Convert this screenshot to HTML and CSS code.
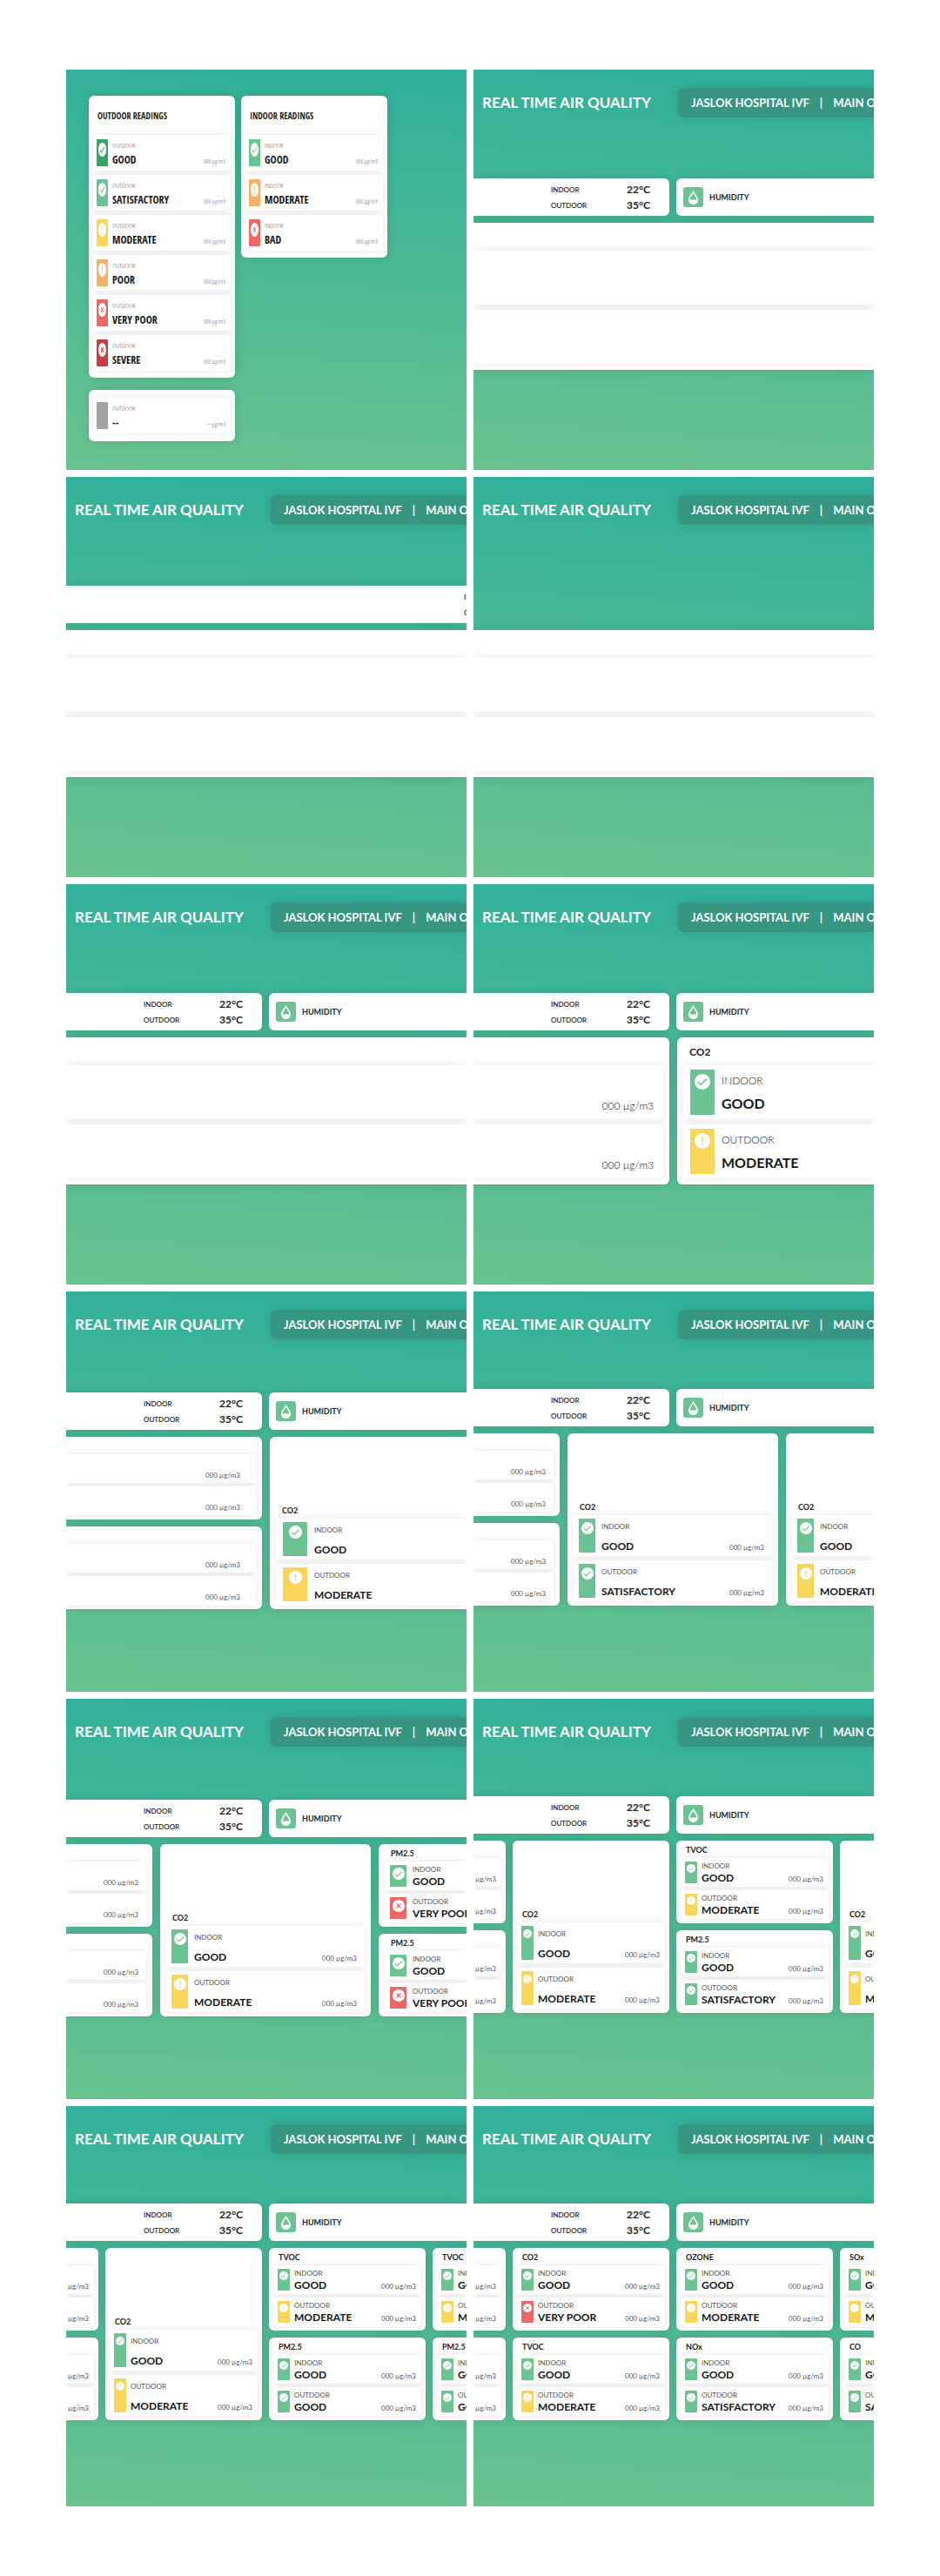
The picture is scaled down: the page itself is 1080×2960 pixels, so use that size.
FILE: index.html
```html
<!DOCTYPE html>
<html lang="en">
<head>
<meta charset="utf-8">
<meta name="viewport" content="width=device-width, initial-scale=1">
<title>Real Time Air Quality</title>
<link rel="stylesheet" href="styles.css">
</head>
<body>
<svg class="sprite" aria-hidden="true">
  <symbol id="ok" viewBox="0 0 24 24" preserveAspectRatio="none"><ellipse cx="12" cy="12" rx="12" ry="12" fill="#fff"/><path d="M5.5 12.5l4.2 4.2L18.6 7.8" fill="none" stroke="currentColor" stroke-width="2"/></symbol>
  <symbol id="warn" viewBox="0 0 24 24" preserveAspectRatio="none"><ellipse cx="12" cy="12" rx="12" ry="12" fill="#fff"/><path d="M12 6v7.4M12 15.6v2.4" fill="none" stroke="currentColor" stroke-width="2.4"/></symbol>
  <symbol id="bad" viewBox="0 0 24 24" preserveAspectRatio="none"><ellipse cx="12" cy="12" rx="12" ry="12" fill="#fff"/><path d="M7.8 7.8l8.4 8.4M16.2 7.8l-8.4 8.4" fill="none" stroke="currentColor" stroke-width="2.4"/></symbol>
  <symbol id="drop" viewBox="0 0 11 16"><path d="M5.5 0C4 2.8 0 7 0 10.6a5.5 5.4 0 0 0 11 0C11 7 7 2.8 5.5 0z" fill="#fff"/><path d="M5.5 2.8C4.4 5 1.8 7.8 1.6 10.4h7.8C9.2 7.8 6.6 5 5.5 2.8z" fill="currentColor"/></symbol>
</svg>

<main class="sheet">

  <!-- Legend of every reading state -->
  <section class="board legend">
    <div class="legend-column">
      <article class="card">
        <h2 class="card-title">OUTDOOR READINGS</h2>
        <div class="reading"><span class="bar excellent"><svg class="icon"><use href="#ok"/></svg></span><div class="state"><span class="place">OUTDOOR</span><strong class="status">GOOD</strong></div><span class="value">000 µg/m3</span></div>
        <div class="reading"><span class="bar good"><svg class="icon"><use href="#ok"/></svg></span><div class="state"><span class="place">OUTDOOR</span><strong class="status">SATISFACTORY</strong></div><span class="value">000 µg/m3</span></div>
        <div class="reading"><span class="bar moderate"><svg class="icon"><use href="#warn"/></svg></span><div class="state"><span class="place">OUTDOOR</span><strong class="status">MODERATE</strong></div><span class="value">000 µg/m3</span></div>
        <div class="reading"><span class="bar poor"><svg class="icon"><use href="#warn"/></svg></span><div class="state"><span class="place">OUTDOOR</span><strong class="status">POOR</strong></div><span class="value">000 µg/m3</span></div>
        <div class="reading"><span class="bar very-poor"><svg class="icon"><use href="#bad"/></svg></span><div class="state"><span class="place">OUTDOOR</span><strong class="status">VERY POOR</strong></div><span class="value">000 µg/m3</span></div>
        <div class="reading"><span class="bar severe"><svg class="icon"><use href="#bad"/></svg></span><div class="state"><span class="place">OUTDOOR</span><strong class="status">SEVERE</strong></div><span class="value">000 µg/m3</span></div>
      </article>
      <article class="card untitled">
        <div class="reading"><span class="bar offline"></span><div class="state"><span class="place">OUTDOOR</span><strong class="status">--</strong></div><span class="value">--- µg/m3</span></div>
      </article>
    </div>
    <div class="legend-column">
      <article class="card">
        <h2 class="card-title">INDOOR READINGS</h2>
        <div class="reading"><span class="bar good"><svg class="icon"><use href="#ok"/></svg></span><div class="state"><span class="place">INDOOR</span><strong class="status">GOOD</strong></div><span class="value">000 µg/m3</span></div>
        <div class="reading"><span class="bar poor"><svg class="icon"><use href="#warn"/></svg></span><div class="state"><span class="place">INDOOR</span><strong class="status">MODERATE</strong></div><span class="value">000 µg/m3</span></div>
        <div class="reading"><span class="bar very-poor"><svg class="icon"><use href="#bad"/></svg></span><div class="state"><span class="place">INDOOR</span><strong class="status">BAD</strong></div><span class="value">000 µg/m3</span></div>
      </article>
    </div>
  </section>

  <section class="board large">
    <header class="top"><h1 class="title">REAL TIME AIR QUALITY</h1><p class="site"><span>JASLOK HOSPITAL IVF</span><span>|</span><span>MAIN O</span></p></header>
    <div class="climate">
      <dl class="panel temps"><dt>INDOOR</dt><dd>22°C</dd><dt>OUTDOOR</dt><dd>35°C</dd></dl>
      <div class="panel humidity"><span class="chip"><svg class="drop"><use href="#drop"/></svg></span><span>HUMIDITY</span></div>
    </div>
    <div class="cards one">
      <article class="card from-left to-right"><div class="card-title"></div><div class="reading"></div><div class="reading"></div></article>
    </div>
  </section>

  <section class="board large">
    <header class="top"><h1 class="title">REAL TIME AIR QUALITY</h1><p class="site"><span>JASLOK HOSPITAL IVF</span><span>|</span><span>MAIN O</span></p></header>
    <div class="climate wide">
      <dl class="panel temps"><dt>INDOOR</dt><dt>OUTDOOR</dt></dl>
    </div>
    <div class="cards one">
      <article class="card from-left to-right"><div class="card-title"></div><div class="reading"></div><div class="reading"></div></article>
    </div>
  </section>

  <section class="board large no-climate">
    <header class="top"><h1 class="title">REAL TIME AIR QUALITY</h1><p class="site"><span>JASLOK HOSPITAL IVF</span><span>|</span><span>MAIN O</span></p></header>
    <div class="cards one">
      <article class="card from-left to-right"><div class="card-title"></div><div class="reading"></div><div class="reading"></div></article>
    </div>
  </section>

  <section class="board large">
    <header class="top"><h1 class="title">REAL TIME AIR QUALITY</h1><p class="site"><span>JASLOK HOSPITAL IVF</span><span>|</span><span>MAIN O</span></p></header>
    <div class="climate">
      <dl class="panel temps"><dt>INDOOR</dt><dd>22°C</dd><dt>OUTDOOR</dt><dd>35°C</dd></dl>
      <div class="panel humidity"><span class="chip"><svg class="drop"><use href="#drop"/></svg></span><span>HUMIDITY</span></div>
    </div>
    <div class="cards one">
      <article class="card from-left to-right"><div class="card-title"></div><div class="reading"></div><div class="reading"></div></article>
    </div>
  </section>

  <section class="board large">
    <header class="top"><h1 class="title">REAL TIME AIR QUALITY</h1><p class="site"><span>JASLOK HOSPITAL IVF</span><span>|</span><span>MAIN O</span></p></header>
    <div class="climate">
      <dl class="panel temps"><dt>INDOOR</dt><dd>22°C</dd><dt>OUTDOOR</dt><dd>35°C</dd></dl>
      <div class="panel humidity"><span class="chip"><svg class="drop"><use href="#drop"/></svg></span><span>HUMIDITY</span></div>
    </div>
    <div class="cards two">
      <article class="card from-left"><div class="card-title"></div>
        <div class="reading"><span class="value">000 µg/m3</span></div>
        <div class="reading"><span class="value">000 µg/m3</span></div>
      </article>
      <article class="card to-right"><h2 class="card-title">CO2</h2>
        <div class="reading"><span class="bar good"><svg class="icon"><use href="#ok"/></svg></span><div class="state"><span class="place">INDOOR</span><strong class="status">GOOD</strong></div></div>
        <div class="reading"><span class="bar moderate"><svg class="icon"><use href="#warn"/></svg></span><div class="state"><span class="place">OUTDOOR</span><strong class="status">MODERATE</strong></div></div>
      </article>
    </div>
  </section>

  <section class="board medium tall-top">
    <header class="top"><h1 class="title">REAL TIME AIR QUALITY</h1><p class="site"><span>JASLOK HOSPITAL IVF</span><span>|</span><span>MAIN O</span></p></header>
    <div class="climate">
      <dl class="panel temps"><dt>INDOOR</dt><dd>22°C</dd><dt>OUTDOOR</dt><dd>35°C</dd></dl>
      <div class="panel humidity"><span class="chip"><svg class="drop"><use href="#drop"/></svg></span><span>HUMIDITY</span></div>
    </div>
    <div class="cards two">
      <article class="card from-left"><div class="card-title"></div>
        <div class="reading"><span class="value">000 µg/m3</span></div>
        <div class="reading"><span class="value">000 µg/m3</span></div>
      </article>
      <article class="card hero to-right"><h2 class="card-title">CO2</h2>
        <div class="reading"><span class="bar good"><svg class="icon"><use href="#ok"/></svg></span><div class="state"><span class="place">INDOOR</span><strong class="status">GOOD</strong></div></div>
        <div class="reading"><span class="bar moderate"><svg class="icon"><use href="#warn"/></svg></span><div class="state"><span class="place">OUTDOOR</span><strong class="status">MODERATE</strong></div></div>
      </article>
      <article class="card from-left"><div class="card-title"></div>
        <div class="reading"><span class="value">000 µg/m3</span></div>
        <div class="reading"><span class="value">000 µg/m3</span></div>
      </article>
    </div>
  </section>

  <section class="board small">
    <header class="top"><h1 class="title">REAL TIME AIR QUALITY</h1><p class="site"><span>JASLOK HOSPITAL IVF</span><span>|</span><span>MAIN O</span></p></header>
    <div class="climate">
      <dl class="panel temps"><dt>INDOOR</dt><dd>22°C</dd><dt>OUTDOOR</dt><dd>35°C</dd></dl>
      <div class="panel humidity"><span class="chip"><svg class="drop"><use href="#drop"/></svg></span><span>HUMIDITY</span></div>
    </div>
    <div class="cards three">
      <article class="card from-left"><div class="card-title"></div>
        <div class="reading"><span class="value">000 µg/m3</span></div>
        <div class="reading"><span class="value">000 µg/m3</span></div>
      </article>
      <article class="card hero"><h2 class="card-title">CO2</h2>
        <div class="reading"><span class="bar good"><svg class="icon"><use href="#ok"/></svg></span><div class="state"><span class="place">INDOOR</span><strong class="status">GOOD</strong></div><span class="value">000 µg/m3</span></div>
        <div class="reading"><span class="bar good"><svg class="icon"><use href="#ok"/></svg></span><div class="state"><span class="place">OUTDOOR</span><strong class="status">SATISFACTORY</strong></div><span class="value">000 µg/m3</span></div>
      </article>
      <article class="card hero to-right"><h2 class="card-title">CO2</h2>
        <div class="reading"><span class="bar good"><svg class="icon"><use href="#ok"/></svg></span><div class="state"><span class="place">INDOOR</span><strong class="status">GOOD</strong></div></div>
        <div class="reading"><span class="bar moderate"><svg class="icon"><use href="#warn"/></svg></span><div class="state"><span class="place">OUTDOOR</span><strong class="status">MODERATE</strong></div></div>
      </article>
      <article class="card from-left"><div class="card-title"></div>
        <div class="reading"><span class="value">000 µg/m3</span></div>
        <div class="reading"><span class="value">000 µg/m3</span></div>
      </article>
    </div>
  </section>

  <section class="board small tall-top">
    <header class="top"><h1 class="title">REAL TIME AIR QUALITY</h1><p class="site"><span>JASLOK HOSPITAL IVF</span><span>|</span><span>MAIN O</span></p></header>
    <div class="climate">
      <dl class="panel temps"><dt>INDOOR</dt><dd>22°C</dd><dt>OUTDOOR</dt><dd>35°C</dd></dl>
      <div class="panel humidity"><span class="chip"><svg class="drop"><use href="#drop"/></svg></span><span>HUMIDITY</span></div>
    </div>
    <div class="cards three">
      <article class="card from-left"><div class="card-title"></div>
        <div class="reading"><span class="value">000 µg/m3</span></div>
        <div class="reading"><span class="value">000 µg/m3</span></div>
      </article>
      <article class="card hero"><h2 class="card-title">CO2</h2>
        <div class="reading"><span class="bar good"><svg class="icon"><use href="#ok"/></svg></span><div class="state"><span class="place">INDOOR</span><strong class="status">GOOD</strong></div><span class="value">000 µg/m3</span></div>
        <div class="reading"><span class="bar moderate"><svg class="icon"><use href="#warn"/></svg></span><div class="state"><span class="place">OUTDOOR</span><strong class="status">MODERATE</strong></div><span class="value">000 µg/m3</span></div>
      </article>
      <article class="card to-right"><h2 class="card-title">PM2.5</h2>
        <div class="reading"><span class="bar good"><svg class="icon"><use href="#ok"/></svg></span><div class="state"><span class="place">INDOOR</span><strong class="status">GOOD</strong></div></div>
        <div class="reading"><span class="bar very-poor"><svg class="icon"><use href="#bad"/></svg></span><div class="state"><span class="place">OUTDOOR</span><strong class="status">VERY POOR</strong></div></div>
      </article>
      <article class="card from-left"><div class="card-title"></div>
        <div class="reading"><span class="value">000 µg/m3</span></div>
        <div class="reading"><span class="value">000 µg/m3</span></div>
      </article>
      <article class="card to-right"><h2 class="card-title">PM2.5</h2>
        <div class="reading"><span class="bar good"><svg class="icon"><use href="#ok"/></svg></span><div class="state"><span class="place">INDOOR</span><strong class="status">GOOD</strong></div></div>
        <div class="reading"><span class="bar very-poor"><svg class="icon"><use href="#bad"/></svg></span><div class="state"><span class="place">OUTDOOR</span><strong class="status">VERY POOR</strong></div></div>
      </article>
    </div>
  </section>

  <section class="board compact">
    <header class="top"><h1 class="title">REAL TIME AIR QUALITY</h1><p class="site"><span>JASLOK HOSPITAL IVF</span><span>|</span><span>MAIN O</span></p></header>
    <div class="climate">
      <dl class="panel temps"><dt>INDOOR</dt><dd>22°C</dd><dt>OUTDOOR</dt><dd>35°C</dd></dl>
      <div class="panel humidity"><span class="chip"><svg class="drop"><use href="#drop"/></svg></span><span>HUMIDITY</span></div>
    </div>
    <div class="cards four">
      <article class="card from-left"><div class="card-title"></div>
        <div class="reading"><span class="value">000 µg/m3</span></div>
        <div class="reading"><span class="value">000 µg/m3</span></div>
      </article>
      <article class="card hero"><h2 class="card-title">CO2</h2>
        <div class="reading"><span class="bar good"><svg class="icon"><use href="#ok"/></svg></span><div class="state"><span class="place">INDOOR</span><strong class="status">GOOD</strong></div><span class="value">000 µg/m3</span></div>
        <div class="reading"><span class="bar moderate"><svg class="icon"><use href="#warn"/></svg></span><div class="state"><span class="place">OUTDOOR</span><strong class="status">MODERATE</strong></div><span class="value">000 µg/m3</span></div>
      </article>
      <article class="card"><h2 class="card-title">TVOC</h2>
        <div class="reading"><span class="bar good"><svg class="icon"><use href="#ok"/></svg></span><div class="state"><span class="place">INDOOR</span><strong class="status">GOOD</strong></div><span class="value">000 µg/m3</span></div>
        <div class="reading"><span class="bar moderate"><svg class="icon"><use href="#warn"/></svg></span><div class="state"><span class="place">OUTDOOR</span><strong class="status">MODERATE</strong></div><span class="value">000 µg/m3</span></div>
      </article>
      <article class="card hero to-right"><h2 class="card-title">CO2</h2>
        <div class="reading"><span class="bar good"><svg class="icon"><use href="#ok"/></svg></span><div class="state"><span class="place">INDOOR</span><strong class="status">GOOD</strong></div></div>
        <div class="reading"><span class="bar moderate"><svg class="icon"><use href="#warn"/></svg></span><div class="state"><span class="place">OUTDOOR</span><strong class="status">MODERATE</strong></div></div>
      </article>
      <article class="card from-left"><div class="card-title"></div>
        <div class="reading"><span class="value">000 µg/m3</span></div>
        <div class="reading"><span class="value">000 µg/m3</span></div>
      </article>
      <article class="card"><h2 class="card-title">PM2.5</h2>
        <div class="reading"><span class="bar good"><svg class="icon"><use href="#ok"/></svg></span><div class="state"><span class="place">INDOOR</span><strong class="status">GOOD</strong></div><span class="value">000 µg/m3</span></div>
        <div class="reading"><span class="bar good"><svg class="icon"><use href="#ok"/></svg></span><div class="state"><span class="place">OUTDOOR</span><strong class="status">SATISFACTORY</strong></div><span class="value">000 µg/m3</span></div>
      </article>
    </div>
  </section>

  <section class="board compact">
    <header class="top"><h1 class="title">REAL TIME AIR QUALITY</h1><p class="site"><span>JASLOK HOSPITAL IVF</span><span>|</span><span>MAIN O</span></p></header>
    <div class="climate">
      <dl class="panel temps"><dt>INDOOR</dt><dd>22°C</dd><dt>OUTDOOR</dt><dd>35°C</dd></dl>
      <div class="panel humidity"><span class="chip"><svg class="drop"><use href="#drop"/></svg></span><span>HUMIDITY</span></div>
    </div>
    <div class="cards four">
      <article class="card from-left"><div class="card-title"></div>
        <div class="reading"><span class="value">000 µg/m3</span></div>
        <div class="reading"><span class="value">000 µg/m3</span></div>
      </article>
      <article class="card hero"><h2 class="card-title">CO2</h2>
        <div class="reading"><span class="bar good"><svg class="icon"><use href="#ok"/></svg></span><div class="state"><span class="place">INDOOR</span><strong class="status">GOOD</strong></div><span class="value">000 µg/m3</span></div>
        <div class="reading"><span class="bar moderate"><svg class="icon"><use href="#warn"/></svg></span><div class="state"><span class="place">OUTDOOR</span><strong class="status">MODERATE</strong></div><span class="value">000 µg/m3</span></div>
      </article>
      <article class="card"><h2 class="card-title">TVOC</h2>
        <div class="reading"><span class="bar good"><svg class="icon"><use href="#ok"/></svg></span><div class="state"><span class="place">INDOOR</span><strong class="status">GOOD</strong></div><span class="value">000 µg/m3</span></div>
        <div class="reading"><span class="bar moderate"><svg class="icon"><use href="#warn"/></svg></span><div class="state"><span class="place">OUTDOOR</span><strong class="status">MODERATE</strong></div><span class="value">000 µg/m3</span></div>
      </article>
      <article class="card to-right"><h2 class="card-title">TVOC</h2>
        <div class="reading"><span class="bar good"><svg class="icon"><use href="#ok"/></svg></span><div class="state"><span class="place">INDOOR</span><strong class="status">GOOD</strong></div></div>
        <div class="reading"><span class="bar moderate"><svg class="icon"><use href="#warn"/></svg></span><div class="state"><span class="place">OUTDOOR</span><strong class="status">MODERATE</strong></div></div>
      </article>
      <article class="card from-left"><div class="card-title"></div>
        <div class="reading"><span class="value">000 µg/m3</span></div>
        <div class="reading"><span class="value">000 µg/m3</span></div>
      </article>
      <article class="card"><h2 class="card-title">PM2.5</h2>
        <div class="reading"><span class="bar good"><svg class="icon"><use href="#ok"/></svg></span><div class="state"><span class="place">INDOOR</span><strong class="status">GOOD</strong></div><span class="value">000 µg/m3</span></div>
        <div class="reading"><span class="bar good"><svg class="icon"><use href="#ok"/></svg></span><div class="state"><span class="place">OUTDOOR</span><strong class="status">GOOD</strong></div><span class="value">000 µg/m3</span></div>
      </article>
      <article class="card to-right"><h2 class="card-title">PM2.5</h2>
        <div class="reading"><span class="bar good"><svg class="icon"><use href="#ok"/></svg></span><div class="state"><span class="place">INDOOR</span><strong class="status">GOOD</strong></div></div>
        <div class="reading"><span class="bar good"><svg class="icon"><use href="#ok"/></svg></span><div class="state"><span class="place">OUTDOOR</span><strong class="status">GOOD</strong></div></div>
      </article>
    </div>
  </section>

  <section class="board compact">
    <header class="top"><h1 class="title">REAL TIME AIR QUALITY</h1><p class="site"><span>JASLOK HOSPITAL IVF</span><span>|</span><span>MAIN O</span></p></header>
    <div class="climate">
      <dl class="panel temps"><dt>INDOOR</dt><dd>22°C</dd><dt>OUTDOOR</dt><dd>35°C</dd></dl>
      <div class="panel humidity"><span class="chip"><svg class="drop"><use href="#drop"/></svg></span><span>HUMIDITY</span></div>
    </div>
    <div class="cards four">
      <article class="card from-left"><div class="card-title"></div>
        <div class="reading"><span class="value">000 µg/m3</span></div>
        <div class="reading"><span class="value">000 µg/m3</span></div>
      </article>
      <article class="card"><h2 class="card-title">CO2</h2>
        <div class="reading"><span class="bar good"><svg class="icon"><use href="#ok"/></svg></span><div class="state"><span class="place">INDOOR</span><strong class="status">GOOD</strong></div><span class="value">000 µg/m3</span></div>
        <div class="reading"><span class="bar very-poor"><svg class="icon"><use href="#bad"/></svg></span><div class="state"><span class="place">OUTDOOR</span><strong class="status">VERY POOR</strong></div><span class="value">000 µg/m3</span></div>
      </article>
      <article class="card"><h2 class="card-title">OZONE</h2>
        <div class="reading"><span class="bar good"><svg class="icon"><use href="#ok"/></svg></span><div class="state"><span class="place">INDOOR</span><strong class="status">GOOD</strong></div><span class="value">000 µg/m3</span></div>
        <div class="reading"><span class="bar moderate"><svg class="icon"><use href="#warn"/></svg></span><div class="state"><span class="place">OUTDOOR</span><strong class="status">MODERATE</strong></div><span class="value">000 µg/m3</span></div>
      </article>
      <article class="card to-right"><h2 class="card-title">SOx</h2>
        <div class="reading"><span class="bar good"><svg class="icon"><use href="#ok"/></svg></span><div class="state"><span class="place">INDOOR</span><strong class="status">GOOD</strong></div></div>
        <div class="reading"><span class="bar moderate"><svg class="icon"><use href="#warn"/></svg></span><div class="state"><span class="place">OUTDOOR</span><strong class="status">MODERATE</strong></div></div>
      </article>
      <article class="card from-left"><div class="card-title"></div>
        <div class="reading"><span class="value">000 µg/m3</span></div>
        <div class="reading"><span class="value">000 µg/m3</span></div>
      </article>
      <article class="card"><h2 class="card-title">TVOC</h2>
        <div class="reading"><span class="bar good"><svg class="icon"><use href="#ok"/></svg></span><div class="state"><span class="place">INDOOR</span><strong class="status">GOOD</strong></div><span class="value">000 µg/m3</span></div>
        <div class="reading"><span class="bar moderate"><svg class="icon"><use href="#warn"/></svg></span><div class="state"><span class="place">OUTDOOR</span><strong class="status">MODERATE</strong></div><span class="value">000 µg/m3</span></div>
      </article>
      <article class="card"><h2 class="card-title">NOx</h2>
        <div class="reading"><span class="bar good"><svg class="icon"><use href="#ok"/></svg></span><div class="state"><span class="place">INDOOR</span><strong class="status">GOOD</strong></div><span class="value">000 µg/m3</span></div>
        <div class="reading"><span class="bar good"><svg class="icon"><use href="#ok"/></svg></span><div class="state"><span class="place">OUTDOOR</span><strong class="status">SATISFACTORY</strong></div><span class="value">000 µg/m3</span></div>
      </article>
      <article class="card to-right"><h2 class="card-title">CO</h2>
        <div class="reading"><span class="bar good"><svg class="icon"><use href="#ok"/></svg></span><div class="state"><span class="place">INDOOR</span><strong class="status">GOOD</strong></div></div>
        <div class="reading"><span class="bar good"><svg class="icon"><use href="#ok"/></svg></span><div class="state"><span class="place">OUTDOOR</span><strong class="status">SATISFACTORY</strong></div></div>
      </article>
    </div>
  </section>

</main>
</body>
</html>
```
FILE: styles.css
```css
* { box-sizing: border-box; }

body {
  margin: 0;
  background: #fff;
  color: #222;
  font-family: Lato, "Liberation Sans", sans-serif;
}

h1, h2, p, dl, dd { margin: 0; }

.sprite { display: none; }

.sheet {
  display: grid;
  grid-template-columns: repeat(2, minmax(0, 1fr));
  gap: 8px;
  padding: 80px 76px;
}

/* ---- board ---- */
.board {
  --top: 112px;
  --title-h: 20px;
  --title-size: 9px;
  --title-inset: 14px;
  --pad: 7px;
  --pad-bottom: 5px;
  --reading-h: 33px;
  --reading-gap: 4px;
  --reading-pad: 4px;
  --inset: 6px;
  --value-inset: 9px;
  --bar: 19px;
  --icon-w: 14px;
  --icon-h: 14px;
  --icon-top: 3px;
  --text-gap: 7px;
  --small: 8px;
  --small-line: 10px;
  --small-weight: 400;
  --small-color: #555;
  --big: 12px;
  --big-line: 12px;
  --state-top: 0px;
  --state-bottom: 0px;
  aspect-ratio: 1;
  overflow: hidden;
  background: linear-gradient(184deg, #2fb09b, #6ac38f);
}

.top {
  display: flex;
  align-items: flex-start;
  min-height: var(--top);
  padding: 21px 0 0 10px;
  color: #fff;
}

.title {
  flex: 0 0 225px;
  font-size: 17px;
  font-weight: 700;
  line-height: 34px;
  white-space: nowrap;
}

.site {
  display: flex;
  flex: 1;
  gap: 12px;
  min-width: 0;
  padding-left: 15px;
  border-radius: 6px 0 0 6px;
  background: #369682;
  box-shadow: 0 0 12px rgba(0, 0, 0, .12);
  font-size: 13px;
  font-weight: 700;
  line-height: 34px;
  white-space: nowrap;
}

/* ---- temperature and humidity ---- */
.climate {
  display: grid;
  grid-template-columns: 225px minmax(0, 1fr);
  gap: 8px;
  margin-bottom: 8px;
}

.panel {
  min-height: 43px;
  background: #fff;
  box-shadow: 0 0 12px rgba(0, 0, 0, .12);
}

.temps {
  display: grid;
  grid-template-columns: 87px 1fr;
  align-content: center;
  padding-left: 89px;
  border-radius: 0 6px 6px 0;
  line-height: 18px;
  white-space: nowrap;
}

.temps dt { font-size: 8px; font-weight: 600; }
.temps dd { font-size: 12px; font-weight: 700; }

.humidity {
  display: flex;
  align-items: center;
  gap: 7px;
  padding-left: 8px;
  border-radius: 6px 0 0 6px;
  font-size: 9px;
  font-weight: 700;
}

.chip {
  display: grid;
  place-items: center;
  width: 23px;
  height: 23px;
  border-radius: 3px;
  background: #6ac390;
  color: #6ac390;
}

.drop { width: 11px; height: 16px; }

.climate.wide { grid-template-columns: minmax(0, 1fr); }
.wide .temps { grid-template-columns: 1fr; padding-left: 457px; border-radius: 0; }

/* ---- cards ---- */
.cards { display: grid; gap: 8px 9px; }
.cards.one { grid-template-columns: minmax(0, 1fr); }
.cards.two { grid-template-columns: 225px minmax(0, 1fr); }
.cards.three { grid-template-columns: 99px 242px minmax(0, 1fr); }
.cards.four { grid-template-columns: 37px 180px 180px minmax(0, 1fr); gap: 8px; }

.card {
  display: flex;
  flex-direction: column;
  gap: var(--reading-gap);
  overflow: hidden;
  padding: 0 var(--pad) var(--pad-bottom);
  border-radius: 6px;
  background: #fff;
  box-shadow: 0 0 12px rgba(0, 0, 0, .12);
}

.card-title {
  height: var(--title-h);
  margin-bottom: calc(0px - var(--reading-gap));
  padding-left: calc(var(--title-inset) - var(--pad));
  padding-top: 3px;
  font-size: var(--title-size);
  font-weight: 700;
  line-height: calc(var(--title-h) - 4px);
  white-space: nowrap;
}

.card.from-left { padding-left: 0; border-radius: 0 6px 6px 0; }
.card.to-right { padding-right: 0; border-radius: 6px 0 0 6px; }
.card.from-left.to-right { border-radius: 0; }

.card.hero {
  --reading-h: 47px;
  --reading-gap: 5px;
  --icon-top: 4px;
  --state-top: 4px;
  --state-bottom: 1px;
  grid-row: span 2;
  justify-content: flex-end;
}

.reading {
  display: flex;
  gap: var(--text-gap);
  min-height: var(--reading-h);
  padding: var(--reading-pad) var(--value-inset) var(--reading-pad) var(--inset);
  border-radius: 4px;
  background: #fff;
  box-shadow: 0 0 10px rgba(0, 0, 0, .1);
  white-space: nowrap;
}

.from-left .reading { border-radius: 0 4px 4px 0; justify-content: flex-end; padding-left: 0; }
.to-right .reading { border-radius: 4px 0 0 4px; padding-right: 0; }
.from-left.to-right .reading { border-radius: 0; }

.bar {
  display: flex;
  flex: 0 0 var(--bar);
  justify-content: center;
  padding-top: var(--icon-top);
  border-radius: 1px;
  background: currentColor;
}

.icon { width: var(--icon-w); height: var(--icon-h); }

.excellent { color: #32a663; }
.good { color: #6ac390; }
.moderate { color: #f9d55a; }
.poor { color: #f4b266; }
.very-poor { color: #ea6868; }
.severe { color: #c53d41; }
.offline { color: #a3a3a3; }

.state {
  display: flex;
  flex: 1;
  flex-direction: column;
  justify-content: space-between;
  padding-top: var(--state-top);
  padding-bottom: var(--state-bottom);
}

.place, .value {
  color: var(--small-color);
  font-size: var(--small);
  font-weight: var(--small-weight);
  line-height: var(--small-line);
}

.value { align-self: flex-end; padding-bottom: var(--state-bottom); }

.status {
  color: #161616;
  font-size: var(--big);
  font-weight: 700;
  line-height: var(--big-line);
}

/* ---- board variants ---- */
.tall-top { --top: 116px; }

.large {
  --top: 125px;
  --title-h: 32px;
  --title-size: 12px;
  --pad-bottom: 7px;
  --reading-h: 62px;
  --reading-gap: 6px;
  --reading-pad: 5px;
  --inset: 8px;
  --value-inset: 11px;
  --bar: 28px;
  --icon-w: 18px;
  --icon-h: 18px;
  --icon-top: 5px;
  --text-gap: 8px;
  --small: 12px;
  --small-line: 16px;
  --small-weight: 300;
  --small-color: #111;
  --big: 16px;
  --big-line: 22px;
  --state-top: 5px;
  --state-bottom: 2px;
}

.large.no-climate { --top: 176px; }

.medium {
  --inset: 8px;
  --value-inset: 18px;
  --bar: 28px;
  --icon-w: 15px;
  --icon-h: 15px;
  --text-gap: 8px;
}

.compact {
  --title-inset: 11px;
  --pad: 5px;
  --inset: 5px;
  --value-inset: 6px;
  --bar: 14px;
  --icon-w: 10px;
  --icon-h: 10px;
  --text-gap: 5px;
}

/* ---- legend ---- */
.legend {
  --title-h: 45px;
  --title-size: 10px;
  --title-inset: 10px;
  --pad: 5px;
  --pad-bottom: 8px;
  --reading-h: 41px;
  --reading-gap: 5px;
  --reading-pad: 5px;
  --inset: 4px;
  --value-inset: 6px;
  --bar: 13px;
  --icon-w: 9px;
  --icon-h: 16px;
  --icon-top: 4px;
  --text-gap: 5px;
  --small-weight: 300;
  --small-color: #666;
  --big-line: 14px;
  --state-top: 2px;
  display: flex;
  align-items: flex-start;
  gap: 7px;
  padding: 30px 26px;
  font-family: "Liberation Sans Narrow", "Open Sans Condensed", Lato, sans-serif;
}

.legend .place,
.legend .value { font-family: "Open Sans Condensed Light", "Open Sans Condensed", "Liberation Sans Narrow", Lato, sans-serif; }
.legend .value { font-size: 7px; }

.legend-column {
  display: flex;
  flex: 0 0 168px;
  flex-direction: column;
  gap: 14px;
}

.untitled { padding-top: 9px; padding-bottom: 9px; }
```
